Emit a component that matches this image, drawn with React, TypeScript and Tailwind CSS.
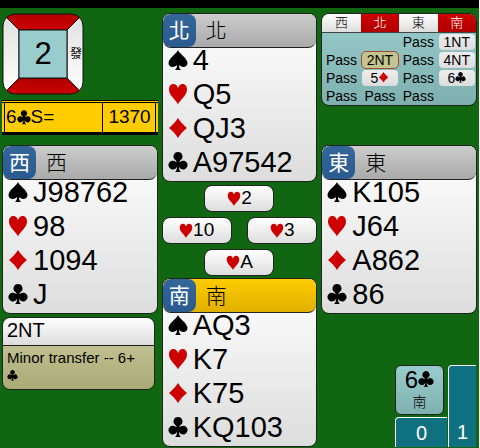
import clsx from 'clsx';

const sans = 'font-["Liberation_Sans","Noto_Sans_CJK_TC",sans-serif]';

const SUITS = ['♠', '♥', '♦', '♣'];

const PIPS: Record<string, { label: string; path: string }> = {
    '♠': {
        label: 'spades',
        path: 'M10 0C10.8 3.2 19.5 8.2 19.5 13C19.5 17.8 13.2 18 10.9 14.8C11 17.5 11.6 19 13 20H7C8.4 19 9 17.5 9.1 14.8C6.8 18 .5 17.8 .5 13C.5 8.2 9.2 3.2 10 0Z',
    },
    '♥': {
        label: 'hearts',
        path: 'M10 20.5C9 16.5 1 12 1 5.4C1 1.8 3.2 0 5.4 0C7.8 0 9.4 1.8 10 4.2C10.6 1.8 12.2 0 14.6 0C16.8 0 19 1.8 19 5.4C19 12 11 16.5 10 20.5Z',
    },
    '♦': {
        label: 'diamonds',
        path: 'M10 0C12.2 3.6 15.6 7.4 19 10C15.6 12.6 12.2 16.4 10 20C7.8 16.4 4.4 12.6 1 10C4.4 7.4 7.8 3.6 10 0Z',
    },
    '♣': {
        label: 'clubs',
        path: 'M10 0A4.5 4.5 0 0 1 12.4 8.3Q11.4 9.4 11.3 10.3Q12 10 12.6 9.5A4.4 4.4 0 1 1 10.9 14.2C11 17.2 11.6 19 13 20H7C8.4 19 9 17.2 9.1 14.2A4.4 4.4 0 1 1 7.4 9.5Q8 10 8.7 10.3Q8.6 9.4 7.6 8.3A4.5 4.5 0 0 1 10 0Z',
    },
};

const AUCTION = [
    ['', '', 'Pass', '1NT'],
    ['Pass', '2NT', 'Pass', '4NT'],
    ['Pass', '5♦', 'Pass', '6♣'],
    ['Pass', 'Pass', 'Pass', ''],
];

const SEATS = [
    { name: '西', vulnerable: false },
    { name: '北', vulnerable: true },
    { name: '東', vulnerable: false },
    { name: '南', vulnerable: true },
];

function Suit({ suit, className }: { suit: string; className: string }) {
    const red = suit === '♥' || suit === '♦';
    return (
        <svg
            viewBox="0 0 20 21"
            role="img"
            aria-label={PIPS[suit].label}
            fill="currentColor"
            className={clsx('inline-block shrink-0 align-baseline', red ? 'text-[#cc0000]' : 'text-black', className)}
        >
            <path d={PIPS[suit].path} />
        </svg>
    );
}

// Swaps the suit character inside a bid such as 5♦ for its pip
function Bid({ text, pip }: { text: string; pip: string }) {
    return (
        <>
            {text.split('').map((char, i) => (SUITS.includes(char) ? <Suit key={i} suit={char} className={pip} /> : char))}
        </>
    );
}

function Hand({ seat, cards, active = false }: { seat: string; cards: string[]; active?: boolean }) {
    return (
        <section className="overflow-hidden rounded-lg border border-[#222] bg-linear-to-b from-white to-[#dddddd]">
            <header
                className={clsx(
                    'flex h-[34px] items-stretch rounded-b-lg border-b border-[#222] text-[21px] font-light',
                    active ? 'bg-linear-to-b from-[#ffcc00] to-[#e0b000]' : 'bg-linear-to-b from-[#cccccc] to-[#aaaaaa]',
                )}
            >
                <span className="flex w-[33px] items-center justify-center rounded-lg bg-linear-to-b from-[#336699] to-[#2a5b90] font-normal text-white">
                    {seat}
                </span>
                <span className="flex items-center pl-[10px] text-black">{seat}</span>
            </header>
            <ul className="-mt-[2px] flex flex-col gap-[5px] pb-1 pl-[5px] text-[29px] leading-[29px]">
                {cards.map((holding, i) => (
                    <li key={SUITS[i]} className="flex items-center gap-[5px]">
                        <Suit suit={SUITS[i]} className="h-[21px] w-5" />
                        <span>{holding}</span>
                    </li>
                ))}
            </ul>
        </section>
    );
}

function PlayedCard({ card }: { card: string }) {
    return (
        <button
            type="button"
            className="flex h-[27px] w-[70px] items-center justify-center rounded-lg border border-[#222] bg-linear-to-b from-white to-[#dddddd] text-[19px]"
        >
            <Suit suit="♥" className="h-4 w-[14px]" />
            {card}
        </button>
    );
}

function BoardMarker() {
    return (
        <div className="relative size-[82px]">
            <svg viewBox="0 0 82 82" className="size-full" stroke="#111">
                <defs>
                    <clipPath id="board">
                        <rect x="1" y="1" width="80" height="80" rx="12" />
                    </clipPath>
                    <linearGradient id="red" x2="0" y2="1">
                        <stop offset="0" stopColor="#b00000" />
                        <stop offset="1" stopColor="#cc0000" />
                    </linearGradient>
                    <linearGradient id="white" x2="0" y2="1">
                        <stop offset="0" stopColor="#e0e0e0" />
                        <stop offset="1" stopColor="#ffffff" />
                    </linearGradient>
                </defs>
                <g clipPath="url(#board)">
                    <path d="M0 0H82L65 17H17Z" fill="url(#red)" />
                    <path d="M0 82H82L65 65H17Z" fill="url(#red)" />
                    <path d="M0 0L17 17V65L0 82Z" fill="url(#white)" />
                    <path d="M82 0L65 17V65L82 82Z" fill="url(#white)" />
                    <rect x="17" y="17" width="48" height="48" fill="#99cccc" />
                </g>
                <rect x="1" y="1" width="80" height="80" rx="12" fill="none" />
            </svg>
            <span className="absolute inset-0 flex items-center justify-center text-[31px]">2</span>
            <span className="absolute inset-y-0 right-0 flex w-4 items-center justify-center text-[12px]">發</span>
        </div>
    );
}

function ContractResult() {
    return (
        <div className="border-b-[3px] border-t border-black bg-[#ffcc00] pt-px text-[19px]">
            <div className="flex h-[30px] items-center border-t border-black px-[2px]">
                <span className="flex h-full flex-1 items-center border-l border-black pl-px">
                    <Bid text="6♣S=" pip="h-[15px] w-[14px]" />
                </span>
                <span className="flex h-full w-[54px] items-center justify-end border-x border-black pr-1">1370</span>
            </div>
        </div>
    );
}

function AuctionTable() {
    return (
        <div className="overflow-hidden rounded-lg border border-[#222] bg-linear-to-b from-[#99cccc] to-[#7fb0b0]">
            <table className="w-full table-fixed border-collapse text-center text-[14px]">
                <thead>
                    <tr>
                        {SEATS.map((seat) => (
                            <th
                                key={seat.name}
                                className={clsx(
                                    'h-[18px] border-b border-[#444] text-[13px] leading-[17px] font-light',
                                    seat.vulnerable
                                        ? 'bg-linear-to-b from-[#cc0000] to-[#b00000] text-white'
                                        : 'bg-linear-to-b from-white to-[#dddddd] text-black',
                                )}
                            >
                                {seat.name}
                            </th>
                        ))}
                    </tr>
                </thead>
                <tbody>
                    {AUCTION.map((round, r) => (
                        <tr key={r}>
                            {round.map((call, c) => (
                                <td key={c} className="h-[18px] px-px py-px leading-4">
                                    {call === '' || call === 'Pass' ? (
                                        call
                                    ) : (
                                        <button
                                            type="button"
                                            className={clsx(
                                                'block h-4 w-full rounded-sm leading-4',
                                                call === '2NT'
                                                    ? 'bg-[#c4c490] outline outline-[#a04a30]'
                                                    : 'bg-linear-to-b from-[#eeeeee] to-[#dddddd]',
                                            )}
                                        >
                                            <Bid text={call} pip="h-[11px] w-[11px]" />
                                        </button>
                                    )}
                                </td>
                            ))}
                        </tr>
                    ))}
                </tbody>
            </table>
        </div>
    );
}

function Explanation() {
    return (
        <section className="mr-[3px] overflow-hidden rounded-lg border border-[#222]">
            <h2 className="h-7 border-b border-[#222] bg-linear-to-b from-white to-[#dddddd] pl-1 text-[20px] leading-6">2NT</h2>
            <p className="h-[43px] bg-linear-to-b from-[#c0c090] to-[#aaaa77] pt-[3px] pr-3 pl-1 text-[15px] leading-[18px]">
                Minor transfer -- 6+ <Suit suit="♣" className="h-[11px] w-[11px]" />
            </p>
        </section>
    );
}

function TrickCounter() {
    return (
        <div className="mt-auto flex justify-end gap-px pr-px">
            <div className="flex w-[52px] flex-col gap-[2px]">
                <div className="mr-[3px] flex h-[50px] flex-col items-center rounded-md border border-[#222] bg-linear-to-b from-[#99cccc] to-[#80b0b0]">
                    <span className="text-[24px] leading-7">
                        <Bid text="6♣" pip="h-[17px] w-4" />
                    </span>
                    <span className="text-[14px] leading-4 font-light">南</span>
                </div>
                <div className="flex h-[30px] items-center justify-center rounded-tl-sm border-l border-t border-white bg-[#0f7080] text-[20px] text-white">
                    0
                </div>
            </div>
            <div className="flex w-7 items-end justify-center rounded-tl-sm border-l border-t border-white bg-[#0f7080] text-[20px] leading-[30px] text-white">
                1
            </div>
        </div>
    );
}

export default function App() {
    return (
        <main className={clsx('min-h-screen border-r border-white bg-[#116611] text-black', sans)}>
            <div className="h-2 bg-black"></div>
            <div className="grid grid-cols-3 gap-1 px-[2px] pt-[5px] pb-px">
                <div className="flex flex-col">
                    <BoardMarker />
                    <div className="mt-[5px]">
                        <ContractResult />
                    </div>
                    <div className="mt-[10px] mb-[3px]">
                        <Hand seat="西" cards={['J98762', '98', '1094', 'J']} />
                    </div>
                    <Explanation />
                </div>

                <div className="flex flex-col">
                    <Hand seat="北" cards={['4', 'Q5', 'QJ3', 'A97542']} />
                    <div className="flex flex-col items-center gap-[5px] pt-[3px] pb-[2px]">
                        <PlayedCard card="2" />
                        <div className="flex w-full justify-between">
                            <PlayedCard card="10" />
                            <PlayedCard card="3" />
                        </div>
                        <PlayedCard card="A" />
                    </div>
                    <Hand seat="南" cards={['AQ3', 'K7', 'K75', 'KQ103']} active />
                </div>

                <div className="flex flex-col">
                    <div className="h-[132px]">
                        <AuctionTable />
                    </div>
                    <Hand seat="東" cards={['K105', 'J64', 'A862', '86']} />
                    <TrickCounter />
                </div>
            </div>
        </main>
    );
}
